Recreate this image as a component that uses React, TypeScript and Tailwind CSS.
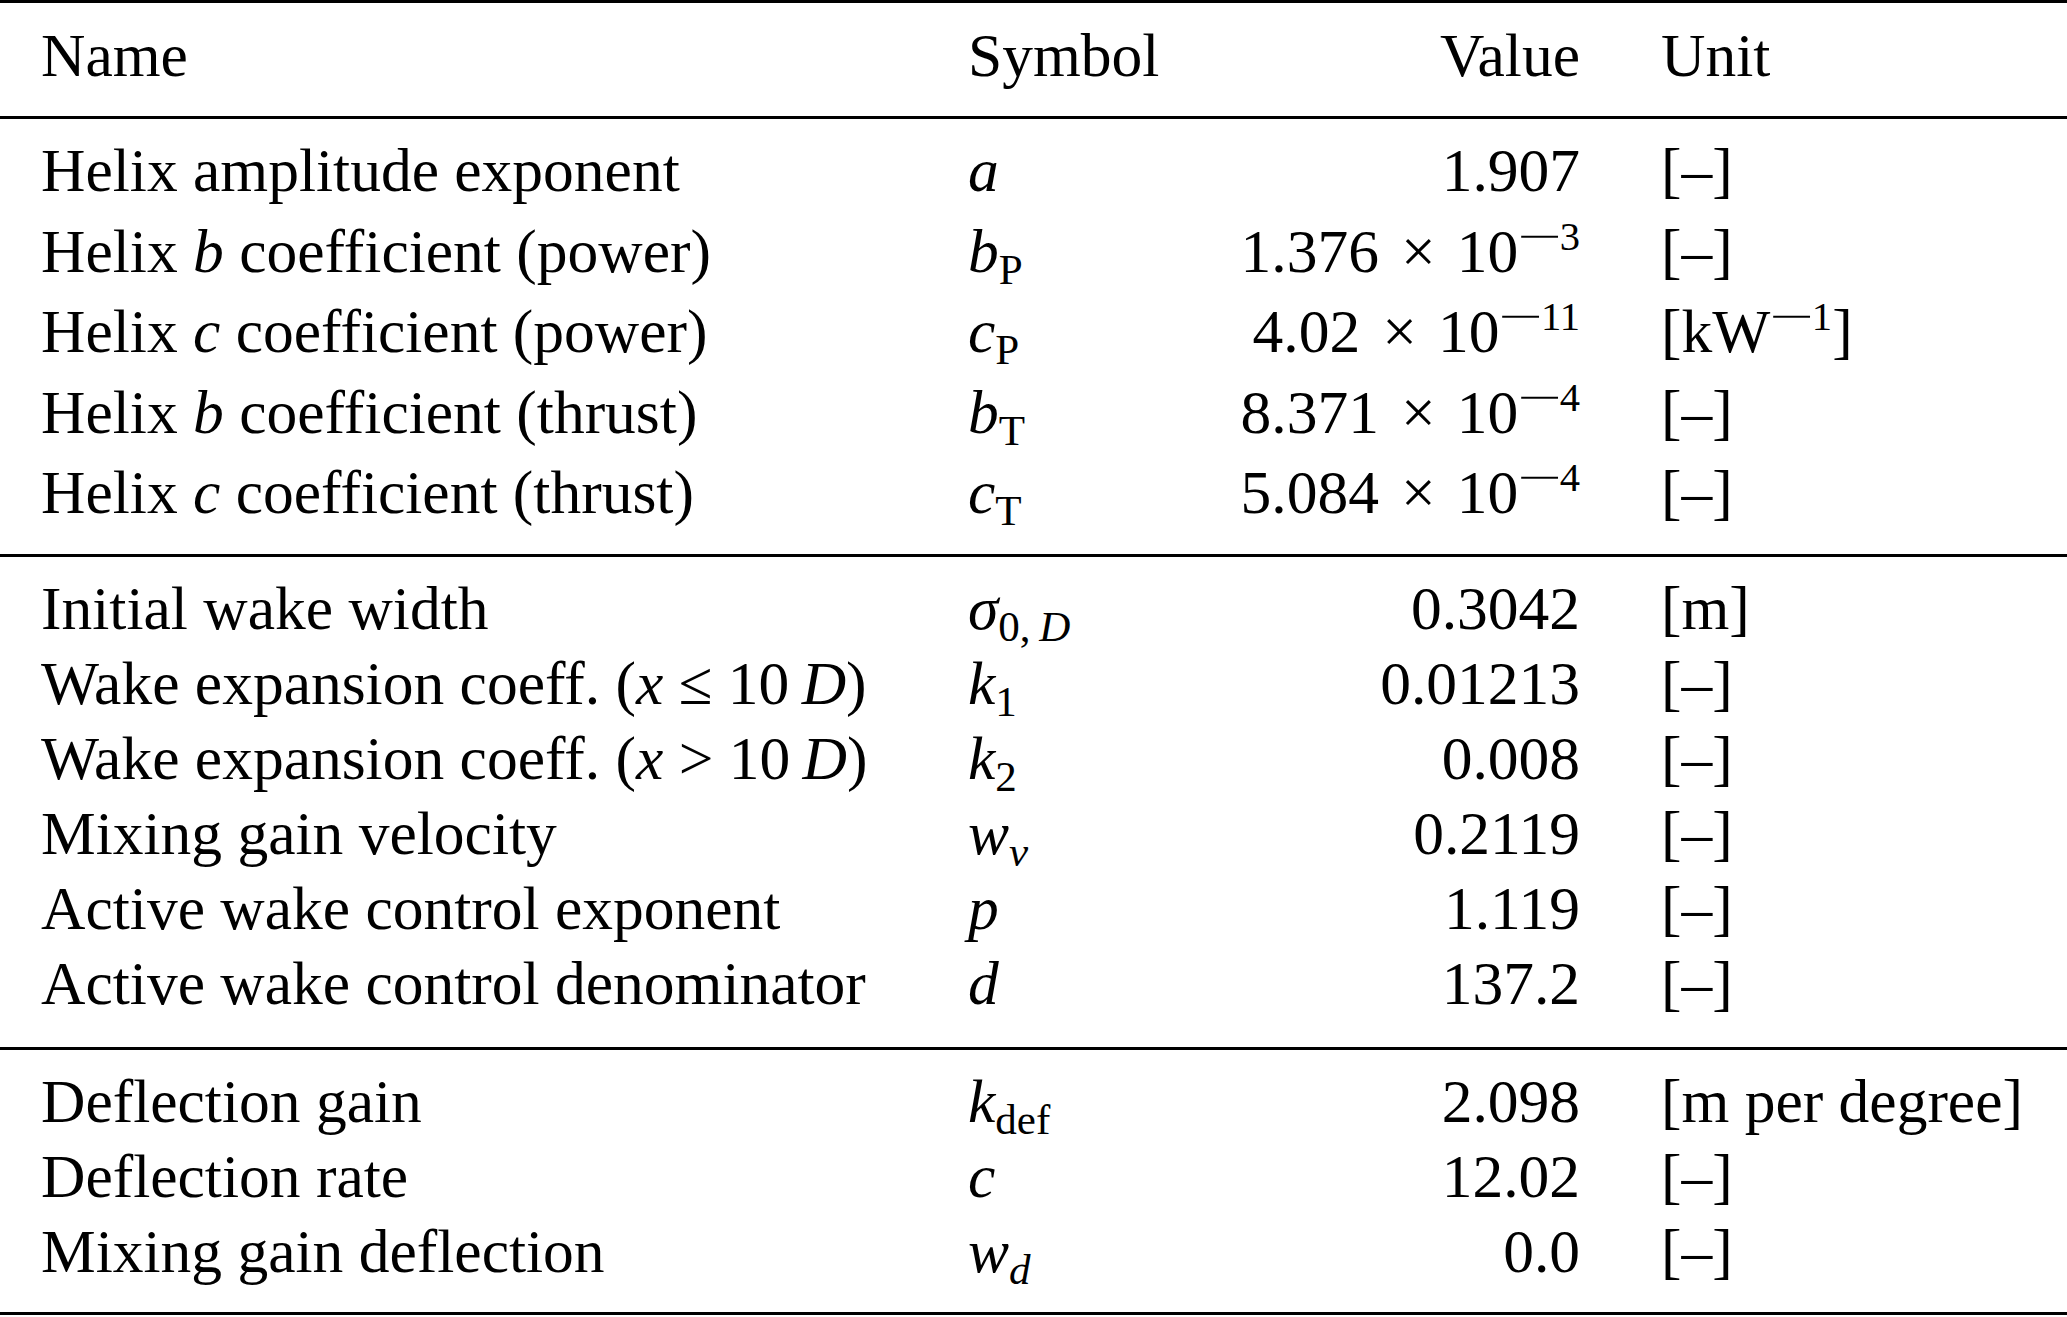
import type { ReactNode } from 'react'

type Row = {
  name: ReactNode
  symbol: ReactNode
  value: ReactNode
  unit: ReactNode
  tall?: boolean
}

// TeX-style minus: wider than the font's own glyph
const Minus = () => (
  <span className="mr-[0.22em] ml-[0.24em] inline-block scale-x-[1.95]">−</span>
)

const Sup = ({ children }: { children: ReactNode }) => (
  <span className="text-[0.66em] leading-[0] align-[22px]">{children}</span>
)

const Sub = ({ children }: { children: ReactNode }) => (
  <span className="text-[0.7em] leading-[0] align-[-12px]">{children}</span>
)

const Times = () => <span className="mr-[0.34em] ml-[0.36em]">×</span>

const Power = ({ base, exp }: { base: string; exp: string }) => (
  <>
    {base}
    <Times />
    10
    <Sup>
      <Minus />
      {exp}
    </Sup>
  </>
)

const dash = '[–]'

const groups: { rows: Row[]; bottom: string }[] = [
  {
    bottom: 'pb-[24px]',
    rows: [
      { name: 'Helix amplitude exponent', symbol: <i>a</i>, value: '1.907', unit: dash },
      {
        name: (
          <>
            Helix <i>b</i> coefficient (power)
          </>
        ),
        symbol: (
          <>
            <i>b</i>
            <Sub>P</Sub>
          </>
        ),
        value: <Power base="1.376" exp="3" />,
        unit: dash,
        tall: true,
      },
      {
        name: (
          <>
            Helix <i>c</i> coefficient (power)
          </>
        ),
        symbol: (
          <>
            <i>c</i>
            <Sub>P</Sub>
          </>
        ),
        value: <Power base="4.02" exp="11" />,
        unit: (
          <>
            [kW
            <Sup>
              <Minus />1
            </Sup>
            ]
          </>
        ),
        tall: true,
      },
      {
        name: (
          <>
            Helix <i>b</i> coefficient (thrust)
          </>
        ),
        symbol: (
          <>
            <i>b</i>
            <Sub>T</Sub>
          </>
        ),
        value: <Power base="8.371" exp="4" />,
        unit: dash,
        tall: true,
      },
      {
        name: (
          <>
            Helix <i>c</i> coefficient (thrust)
          </>
        ),
        symbol: (
          <>
            <i>c</i>
            <Sub>T</Sub>
          </>
        ),
        value: <Power base="5.084" exp="4" />,
        unit: dash,
        tall: true,
      },
    ],
  },
  {
    bottom: 'pb-[26px]',
    rows: [
      {
        name: 'Initial wake width',
        symbol: (
          <>
            <i>σ</i>
            <Sub>
              0,&thinsp;<i>D</i>
            </Sub>
          </>
        ),
        value: '0.3042',
        unit: '[m]',
      },
      {
        name: (
          <>
            Wake expansion coeff. (<i>x</i> ≤ 10&thinsp;<i>D</i>)
          </>
        ),
        symbol: (
          <>
            <i>k</i>
            <Sub>1</Sub>
          </>
        ),
        value: '0.01213',
        unit: dash,
      },
      {
        name: (
          <>
            Wake expansion coeff. (<i>x</i> &gt; 10&thinsp;<i>D</i>)
          </>
        ),
        symbol: (
          <>
            <i>k</i>
            <Sub>2</Sub>
          </>
        ),
        value: '0.008',
        unit: dash,
      },
      {
        name: 'Mixing gain velocity',
        symbol: (
          <>
            <i>w</i>
            <Sub>
              <i>v</i>
            </Sub>
          </>
        ),
        value: '0.2119',
        unit: dash,
      },
      { name: 'Active wake control exponent', symbol: <i>p</i>, value: '1.119', unit: dash },
      { name: 'Active wake control denominator', symbol: <i>d</i>, value: '137.2', unit: dash },
    ],
  },
  {
    bottom: 'pb-[23px]',
    rows: [
      {
        name: 'Deflection gain',
        symbol: (
          <>
            <i>k</i>
            <Sub>def</Sub>
          </>
        ),
        value: '2.098',
        unit: '[m per degree]',
      },
      { name: 'Deflection rate', symbol: <i>c</i>, value: '12.02', unit: dash },
      {
        name: 'Mixing gain deflection',
        symbol: (
          <>
            <i>w</i>
            <Sub>
              <i>d</i>
            </Sub>
          </>
        ),
        value: '0.0',
        unit: dash,
      },
    ],
  },
]

const gridCols = 'grid grid-cols-[927px_232px_380px_1fr] pl-[41px]'

function TableRow({ row }: { row: Row }) {
  return (
    <div className={`${gridCols} ${row.tall ? 'h-[80.5px] pt-[5.5px]' : 'h-[75px]'}`}>
      <div className="whitespace-nowrap">{row.name}</div>
      <div className="whitespace-nowrap">{row.symbol}</div>
      <div className="whitespace-nowrap text-right">{row.value}</div>
      <div className="whitespace-nowrap pl-[81px]">{row.unit}</div>
    </div>
  )
}

export default function App() {
  return (
    <div
      className="h-[1317px] w-[2067px] bg-white text-[61.5px] leading-[75px] text-black"
      style={{ fontFamily: '"Liberation Serif", "Times New Roman", serif' }}
    >
      <div className="h-[3px] bg-black" />
      <div className={`${gridCols} pt-[15px] pb-[23px]`}>
        <div>Name</div>
        <div>Symbol</div>
        <div className="text-right">Value</div>
        <div className="pl-[81px]">Unit</div>
      </div>

      {groups.map((group, index) => (
        <div key={index}>
          <div className="h-[3px] bg-black" />
          <div className={`pt-[14px] ${group.bottom}`}>
            {group.rows.map((row, rowIndex) => (
              <TableRow key={rowIndex} row={row} />
            ))}
          </div>
        </div>
      ))}
      <div className="h-[3px] bg-black" />
    </div>
  )
}
